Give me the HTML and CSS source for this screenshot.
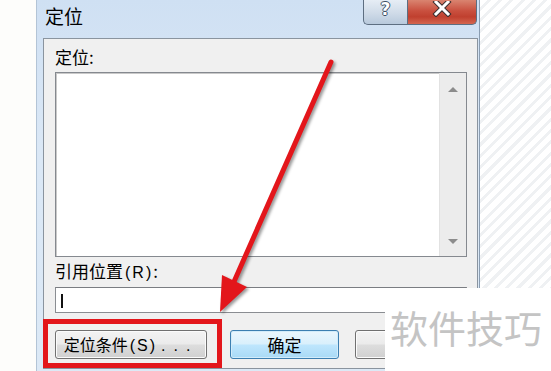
FILE: index.html
```html
<!DOCTYPE html>
<html lang="zh-CN">
<head>
<meta charset="utf-8">
<title>定位</title>
<link rel="stylesheet" href="styles.css">
</head>
<body>
<div class="screen">
  <div class="gutter"></div>
  <div class="dialog">
    <div class="titlebar">
      <span class="title">定位</span>
      <div class="caption-btns">
        <span class="cb help">?</span>
        <span class="cb close">
          <svg width="20" height="16" viewBox="0 0 20 16">
            <path d="M4 1 L16 13 M16 1 L4 13" stroke="#3a3030" stroke-width="5" stroke-linecap="square"/>
            <path d="M4 1 L16 13 M16 1 L4 13" stroke="#ffffff" stroke-width="3" stroke-linecap="square"/>
          </svg>
        </span>
      </div>
    </div>
    <div class="client">
      <div class="label">定位:</div>
      <div class="listbox">
        <div class="list-area"></div>
        <div class="vscroll"><span class="arr up"></span><span class="arr down"></span></div>
      </div>
      <div class="label label-ref">引用位置<span class="acc">(R)</span>:</div>
      <div class="textbox"><span class="caret"></span></div>
      <div class="buttons">
        <div class="btn btn-special">定位条件<span class="acc">(S)</span><span class="dots">...</span></div>
        <div class="btn btn-ok">确定</div>
        <div class="btn btn-cancel"></div>
      </div>
    </div>
  </div>
  <div class="hatch"></div>

  <div class="redbox"></div>
  <svg class="arrow" width="551" height="371" viewBox="0 0 551 371">
    <line x1="331" y1="62" x2="233" y2="284" stroke="#e3161b" stroke-width="5" stroke-linecap="round"/>
    <polygon points="220,312 247,287 222,275" fill="#e3161b"/>
  </svg>
  <div class="watermark">软件技巧</div>
</div>
</body>
</html>
```
FILE: styles.css
```css
html, body {
  margin: 0;
  padding: 0;
  background: #ffffff;
}

.screen {
  position: relative;
  width: 551px;
  height: 371px;
  overflow: hidden;
  display: flex;
  background: #ffffff;
  font-family: "Noto Sans CJK SC", "Noto Sans", sans-serif;
  color: #000;
}

.gutter {
  flex: none;
  width: 36px;
  background: #fdfdfb;
}

.dialog {
  flex: none;
  width: 444px;
  height: 371px;
  box-sizing: border-box;
  border-left: 1px solid #b3c4d6;
  border-right: 1px solid #8a9db2;
  padding: 0 1px 0 6px;
  background: linear-gradient(#cfe0f3, #dbe8f6 40%, #dce9f6);
}

.titlebar {
  height: 38px;
  display: flex;
  align-items: flex-start;
}

.title {
  font-size: 19px;
  line-height: 22px;
  padding-top: 5px;
  padding-left: 2px;
}

.caption-btns {
  margin-left: auto;
  margin-right: 1px;
  display: flex;
}

.cb {
  height: 25px;
  box-sizing: border-box;
  border: 1px solid #5d6e81;
  border-top: none;
  display: flex;
  justify-content: center;
  align-items: flex-start;
}

.help {
  width: 44px;
  border-right: none;
  border-bottom-left-radius: 5px;
  background: linear-gradient(#e6edf5, #cfdbe8 55%, #b8c9dc);
  font-family: "DejaVu Sans", sans-serif;
  font-weight: bold;
  font-size: 17px;
  line-height: 18px;
  color: #ffffff;
  text-shadow: 1px 0 0 #3d5066, -1px 0 0 #3d5066, 0 1px 0 #3d5066, 0 -1px 0 #3d5066;
}

.close {
  width: 70px;
  border-bottom-right-radius: 5px;
  background: linear-gradient(#d98470, #c9503f 45%, #c0402f 70%, #d4654f);
}

.close svg {
  display: block;
  margin-top: 1px;
}

.client {
  height: 331px;
  box-sizing: border-box;
  border: 1px solid #8a949f;
  background: #f0f0f0;
  padding: 8px 10px 0 11px;
}

.label {
  font-size: 17px;
  line-height: 20px;
}

.acc {
  font-family: "Liberation Sans", sans-serif;
  font-size: 16px;
  letter-spacing: 2px;
  margin-left: 2px;
}

.listbox {
  margin-top: 5px;
  height: 185px;
  box-sizing: border-box;
  border: 1px solid #85898f;
  box-shadow: inset 1px 1px 0 #c9c9c9;
  background: #ffffff;
  display: flex;
}

.list-area {
  flex: 1;
}

.vscroll {
  width: 26px;
  background: #ececec;
  border-left: 1px solid #e2e2e2;
  display: flex;
  flex-direction: column;
  align-items: center;
  justify-content: space-between;
  padding: 14px 0 12px;
}

.arr {
  width: 0;
  height: 0;
  border-left: 5px solid transparent;
  border-right: 5px solid transparent;
}

.arr.up {
  border-bottom: 5px solid #8c8c8c;
}

.arr.down {
  border-top: 5px solid #8c8c8c;
}

.label-ref {
  margin-top: 4px;
}

.textbox {
  margin-top: 4px;
  height: 26px;
  box-sizing: border-box;
  border: 1px solid #8a8d92;
  border-top-color: #7a7d82;
  background: #ffffff;
  padding-left: 5px;
}

.caret {
  display: block;
  width: 2px;
  height: 14px;
  margin-top: 6px;
  background: #111;
}

.buttons {
  margin-top: 17px;
  display: flex;
}

.btn {
  height: 29px;
  box-sizing: border-box;
  border: 1px solid #707070;
  border-radius: 3px;
  background: linear-gradient(#f3f3f3, #ebebeb 48%, #dddddd 52%, #d0d0d0);
  box-shadow: inset 0 0 0 1px #fbfbfb;
  font-size: 16px;
  line-height: 27px;
  text-align: center;
  color: #000;
}

.btn-special {
  width: 152px;
}

.dots {
  font-family: "Liberation Sans", sans-serif;
  letter-spacing: 8px;
  margin-left: 4px;
}

.btn-ok {
  width: 109px;
  margin-left: 23px;
  font-size: 17px;
  border-color: #3c7fb1;
  background: linear-gradient(#eaf6fd, #d9f0fc 48%, #bee6fd 52%, #a9daf6);
  box-shadow: inset 0 0 0 1px #d2ecfa;
}

.btn-cancel {
  width: 109px;
  margin-left: 16px;
}

.hatch {
  flex: 1;
  background-color: #ffffff;
  background-image: repeating-linear-gradient(135deg, #ffffff 0 5px, #eff1f3 5px 8px);
}

.redbox {
  position: absolute;
  left: 43px;
  top: 319px;
  width: 179px;
  height: 49px;
  box-sizing: border-box;
  border: 5px solid #e3161b;
}

.arrow {
  position: absolute;
  left: 0;
  top: 0;
  pointer-events: none;
  filter: drop-shadow(2px 2px 1.5px rgba(0, 0, 0, 0.4));
}

.watermark {
  position: absolute;
  left: 385px;
  top: 288px;
  width: 166px;
  height: 83px;
  box-sizing: border-box;
  background: #ffffff;
  padding: 20px 0 0 5px;
  font-size: 38px;
  line-height: 38px;
  color: #c4c4c4;
  white-space: nowrap;
}
```
